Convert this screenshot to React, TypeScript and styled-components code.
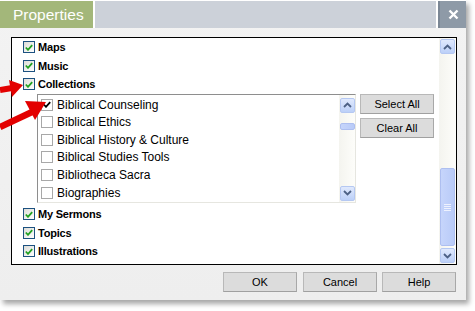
import React from "react";
import styled, { createGlobalStyle } from "styled-components";

const Global = createGlobalStyle`
  html, body { margin: 0; padding: 0; background: #ffffff; }
  body { width: 475px; height: 311px; overflow: hidden; font-family: "Liberation Sans", Arial, sans-serif; }
`;

const Stage = styled.div`
  position: relative;
  width: 475px;
  height: 311px;
  background: #ffffff;
`;

const Dialog = styled.div`
  width: 466px;
  height: 300px;
  display: flex;
  flex-direction: column;
  background: linear-gradient(180deg, #f3f3f3 0%, #eeeeee 100%);
  box-shadow: 3px 4px 5px rgba(0, 0, 0, 0.35);
`;

const TitleBar = styled.div`
  display: flex;
  height: 27px;
  padding-top: 1px;
  background: #ffffff;
  gap: 2px;
  flex: none;
`;

const Tab = styled.div`
  width: 93px;
  background: #a3b77a;
  color: #ffffff;
  font-family: "Liberation Sans", Arial, sans-serif;
  font-size: 15.5px;
  display: flex;
  align-items: center;
  padding-left: 13px;
  box-sizing: border-box;
`;

const TitleFill = styled.div`
  flex: 1;
  background: #ccd1d9;
`;

const CloseBox = styled.div`
  width: 28px;
  background: #8e9aa7;
  border-left: 2px solid #7b8795;
  box-sizing: border-box;
  display: flex;
  align-items: center;
  justify-content: center;
`;

const Body = styled.div`
  flex: 1;
  display: flex;
  flex-direction: column;
  padding: 9px 9px 0 11px;
`;

const ListBox = styled.div`
  height: 226px;
  border: 1px solid #000000;
  background: #ffffff;
  display: flex;
  flex: none;
`;

const ListContent = styled.div`
  flex: 1;
  padding: 0 0 0 11px;
  display: flex;
  flex-direction: column;
`;

const Row = styled.div`
  height: 18.6px;
  display: flex;
  align-items: center;
  gap: 3px;
  flex: none;
`;

const Label = styled.span`
  font-family: "Liberation Sans", Arial, sans-serif;
  font-weight: bold;
  font-size: 11px;
  color: #000000;
  letter-spacing: -0.2px;
`;

const Box = styled.span<{ $nested?: boolean }>`
  width: 10px;
  height: 10px;
  border: 1px solid ${(p) => (p.$nested ? "#a8a8a8" : "#1c5180")};
  background: ${(p) => (p.$nested ? "#ffffff" : "linear-gradient(135deg,#dcdcd7,#ffffff)")};
  display: flex;
  align-items: center;
  justify-content: center;
  flex: none;
`;

const NestedWrap = styled.div`
  display: flex;
  gap: 4px;
  align-items: flex-start;
  margin: 0 0 2px 14px;
  flex: none;
`;

const Nested = styled.div`
  width: 317px;
  height: 107px;
  border: 1px solid #8e8e8e;
  border-right-color: #e6e6e0;
  border-bottom-color: #e6e6e0;
  display: flex;
  gap: 4px;
`;

const NestedList = styled.div`
  flex: 1;
  display: flex;
  flex-direction: column;
  padding: 1px 0 0 3px;
`;

const NestedRow = styled.div`
  height: 17.6px;
  display: flex;
  align-items: center;
  gap: 4px;
  flex: none;
`;

const NestedLabel = styled.span`
  font-family: "Liberation Sans", Arial, sans-serif;
  font-size: 12px;
  color: #000000;
`;

const ScrollTrack = styled.div<{ $w: number }>`
  width: ${(p) => p.$w}px;
  background: linear-gradient(90deg, #f4f4ef, #fdfdfa);
  display: flex;
  flex-direction: column;
  align-items: center;
  padding: 1px 0;
  box-sizing: border-box;
  flex: none;
`;

const ArrowBtn = styled.div`
  width: 15px;
  height: 15px;
  border-radius: 2px;
  background: linear-gradient(180deg, #e0e9fd, #bcd0f8);
  border: 1px solid #b5c8f2;
  box-sizing: border-box;
  display: flex;
  align-items: center;
  justify-content: center;
  flex: none;
`;

const Spacer = styled.div<{ $h: number }>`
  height: ${(p) => p.$h}px;
  flex: none;
`;

const Thumb = styled.div<{ $h: number }>`
  width: 15px;
  height: ${(p) => p.$h}px;
  border-radius: 2px;
  background: linear-gradient(90deg, #c6d5fb, #b9cbf8);
  border: 1px solid #aebff0;
  box-sizing: border-box;
  display: flex;
  align-items: center;
  justify-content: center;
  flex: none;
`;

const Grow = styled.div`
  flex: 1;
`;

const SideButtons = styled.div`
  display: flex;
  flex-direction: column;
  gap: 4px;
`;

const Button = styled.button<{ $w: number; $h: number; $ml?: number }>`
  width: ${(p) => p.$w}px;
  height: ${(p) => p.$h}px;
  margin: 0 0 0 ${(p) => p.$ml ?? 0}px;
  background: #dcdcdc;
  border: 1px solid #b8b8b8;
  border-right-color: #a8a8a8;
  border-bottom-color: #a0a0a0;
  font-family: "Liberation Sans", Arial, sans-serif;
  font-size: 11px;
  color: #000000;
  padding: 0;
`;

const Footer = styled.div`
  display: flex;
  justify-content: flex-end;
  padding: 7px 1px 0 0;
`;

const ArrowLayer = styled.svg`
  position: absolute;
  left: 0;
  top: 0;
  pointer-events: none;
`;

const Check = ({ color }: { color: string }) => (
  <svg width="8" height="7" viewBox="0 0 8 7">
    <path d="M0.8 3.5 L3 5.8 L7.2 1.2" fill="none" stroke={color} strokeWidth="1.8" />
  </svg>
);

const Chevron = ({ down }: { down?: boolean }) => (
  <svg width="9" height="6" viewBox="0 0 9 6">
    <path
      d={down ? "M1 1 L4.5 4.5 L8 1" : "M1 5 L4.5 1.5 L8 5"}
      fill="none"
      stroke="#4d6185"
      strokeWidth="1.8"
    />
  </svg>
);

const Grip = () => (
  <svg width="7" height="7" viewBox="0 0 7 7">
    <path d="M0 0.5H7M0 2.5H7M0 4.5H7M0 6.5H7" stroke="#eef2fe" strokeWidth="1" />
  </svg>
);

const mainTop = ["Maps", "Music", "Collections"];
const mainBottom = ["My Sermons", "Topics", "Illustrations"];
const collections = [
  "Biblical Counseling",
  "Biblical Ethics",
  "Biblical History & Culture",
  "Biblical Studies Tools",
  "Bibliotheca Sacra",
  "Biographies",
];

const MainItem = ({ label }: { label: string }) => (
  <Row>
    <Box>
      <Check color="#21a121" />
    </Box>
    <Label>{label}</Label>
  </Row>
);

export default function App() {
  return (
    <Stage>
      <Global />
      <Dialog>
        <TitleBar>
          <Tab>Properties</Tab>
          <TitleFill />
          <CloseBox>
            <svg width="11" height="11" viewBox="0 0 11 11">
              <path d="M1.5 1.5 L9.5 9.5 M9.5 1.5 L1.5 9.5" stroke="#ffffff" strokeWidth="2.4" />
            </svg>
          </CloseBox>
        </TitleBar>
        <Body>
          <ListBox>
            <ListContent>
              {mainTop.map((l) => (
                <MainItem key={l} label={l} />
              ))}
              <NestedWrap>
                <Nested>
                  <NestedList>
                    {collections.map((c, i) => (
                      <NestedRow key={c}>
                        <Box $nested>{i === 0 && <Check color="#000000" />}</Box>
                        <NestedLabel>{c}</NestedLabel>
                      </NestedRow>
                    ))}
                  </NestedList>
                  <ScrollTrack $w={16}>
                    <Spacer $h={2} />
                    <ArrowBtn>
                      <Chevron />
                    </ArrowBtn>
                    <Spacer $h={10} />
                    <Thumb $h={7} />
                    <Grow />
                    <ArrowBtn>
                      <Chevron down />
                    </ArrowBtn>
                  </ScrollTrack>
                </Nested>
                <SideButtons>
                  <Button $w={74} $h={20}>Select All</Button>
                  <Button $w={74} $h={20}>Clear All</Button>
                </SideButtons>
              </NestedWrap>
              {mainBottom.map((l) => (
                <MainItem key={l} label={l} />
              ))}
            </ListContent>
            <ScrollTrack $w={17}>
              <ArrowBtn>
                <Chevron />
              </ArrowBtn>
              <Grow />
              <Thumb $h={78}>
                <Grip />
              </Thumb>
              <Spacer $h={2} />
              <ArrowBtn>
                <Chevron down />
              </ArrowBtn>
            </ScrollTrack>
          </ListBox>
          <Footer>
            <Button $w={74} $h={20}>OK</Button>
            <Button $w={74} $h={20} $ml={6}>Cancel</Button>
            <Button $w={74} $h={20} $ml={5}>Help</Button>
          </Footer>
        </Body>
      </Dialog>
      <ArrowLayer width="475" height="311" viewBox="0 0 475 311">
        <path d="M0 90 L12 88" stroke="#e30000" strokeWidth="6" strokeLinecap="butt" />
        <path d="M9 80 L23 85 L12 97 Z" fill="#e30000" />
        <path d="M0 127 L32 112" stroke="#e30000" strokeWidth="6.5" strokeLinecap="butt" />
        <path d="M25 101 L46 102 L35 120 Z" fill="#e30000" />
      </ArrowLayer>
    </Stage>
  );
}
